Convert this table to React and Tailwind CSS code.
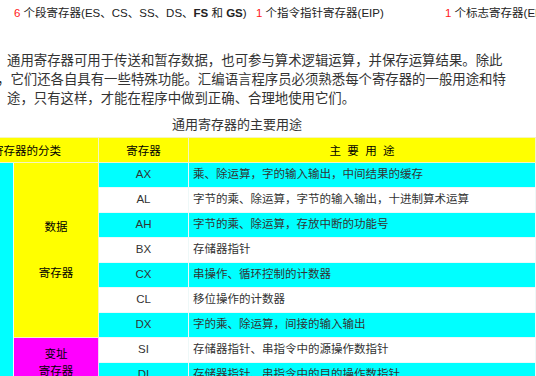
import React from 'react';

const cn = { fontFamily: '"Liberation Sans", "Noto Sans CJK SC", sans-serif' };

const rows = [
  { reg: 'AX', use: '乘、除运算，字的输入输出，中间结果的缓存', bg: 'bg-[#00ffff]' },
  { reg: 'AL', use: '字节的乘、除运算，字节的输入输出，十进制算术运算', bg: 'bg-white' },
  { reg: 'AH', use: '字节的乘、除运算，存放中断的功能号', bg: 'bg-[#00ffff]' },
  { reg: 'BX', use: '存储器指针', bg: 'bg-white' },
  { reg: 'CX', use: '串操作、循环控制的计数器', bg: 'bg-[#00ffff]' },
  { reg: 'CL', use: '移位操作的计数器', bg: 'bg-white' },
  { reg: 'DX', use: '字的乘、除运算，间接的输入输出', bg: 'bg-[#00ffff]' },
  { reg: 'SI', use: '存储器指针、串指令中的源操作数指针', bg: 'bg-white' },
  { reg: 'DI', use: '存储器指针、串指令中的目的操作数指针', bg: 'bg-[#00ffff]' },
];

const App = () => {
  return (
    <div className="w-[536px] h-[376px] overflow-hidden bg-white" style={cn}>
      {/* register count line */}
      <div className="h-[26px] leading-[26px] text-[11.5px] text-[#222] whitespace-nowrap flex">
        <span className="ml-[14px] w-[242px] shrink-0">
          <span className="text-[#ff2020]">6</span> 个段寄存器(ES、CS、SS、DS、<b>FS</b> 和 <b>GS</b>)
        </span>
        <span className="w-[189px] shrink-0">
          <span className="text-[#ff2020]">1</span> 个指令指针寄存器(EIP)
        </span>
        <span className="shrink-0">
          <span className="text-[#ff2020]">1</span> 个标志寄存器(EFLAGS)
        </span>
      </div>

      {/* intro paragraph */}
      <div className="mt-[25px] text-[13.4px] leading-[19px] text-[#333] whitespace-nowrap">
        <div className="ml-[7px]">通用寄存器可用于传送和暂存数据，也可参与算术逻辑运算，并保存运算结果。除此</div>
        <div className="-ml-[3px]">，它们还各自具有一些特殊功能。汇编语言程序员必须熟悉每个寄存器的一般用途和特</div>
        <div className="ml-[7px]">途，只有这样，才能在程序中做到正确、合理地使用它们。</div>
      </div>

      <div className="pt-[4px] h-[29px] leading-[25px] pl-[172px] text-[13px] text-[#333] whitespace-nowrap">
        通用寄存器的主要用途
      </div>

      {/* register table */}
      <table className="-ml-[46px] w-[582px] table-fixed border-collapse text-[11.5px]">
        <colgroup>
          <col className="w-[59px]" />
          <col className="w-[85px]" />
          <col className="w-[90px]" />
          <col />
        </colgroup>
        <thead>
          <tr className="bg-[#ffff00] text-black">
            <td colSpan={2} className="h-[25px] p-0 text-center border border-[#f4f4c0] pt-[3px]">寄存器的分类</td>
            <td className="h-[25px] p-0 text-center border border-[#f4f4c0] pt-[3px]">寄存器</td>
            <td className="h-[25px] p-0 text-center border border-[#f4f4c0] pt-[3px] whitespace-pre">主  要  用  途</td>
          </tr>
        </thead>
        <tbody className="text-[#333]">
          {rows.map((r, i) => (
            <tr key={r.reg}>
              {i === 0 && <td rowSpan={9} className="bg-[#00ffff] p-0 border border-[#e8fcfc]" />}
              {i === 0 && (
                <td rowSpan={7} className="bg-[#ffff00] p-0 text-center text-black leading-[23px] border border-[#f4f4c0]">
                  数据<br /><br />寄存器
                </td>
              )}
              {i === 7 && (
                <td rowSpan={2} className="bg-[#ff00ff] p-0 text-center text-black leading-[17px] align-top pt-[8px] border border-[#f8d0f8]">
                  变址<br />寄存器
                </td>
              )}
              <td className={`${r.bg} h-[25px] p-0 text-center border border-[#eef8f8]`}>{r.reg}</td>
              <td className={`${r.bg} h-[25px] p-0 pl-[4px] whitespace-nowrap border border-[#eef8f8]`}>{r.use}</td>
            </tr>
          ))}
        </tbody>
      </table>
    </div>
  );
};

export default App;
